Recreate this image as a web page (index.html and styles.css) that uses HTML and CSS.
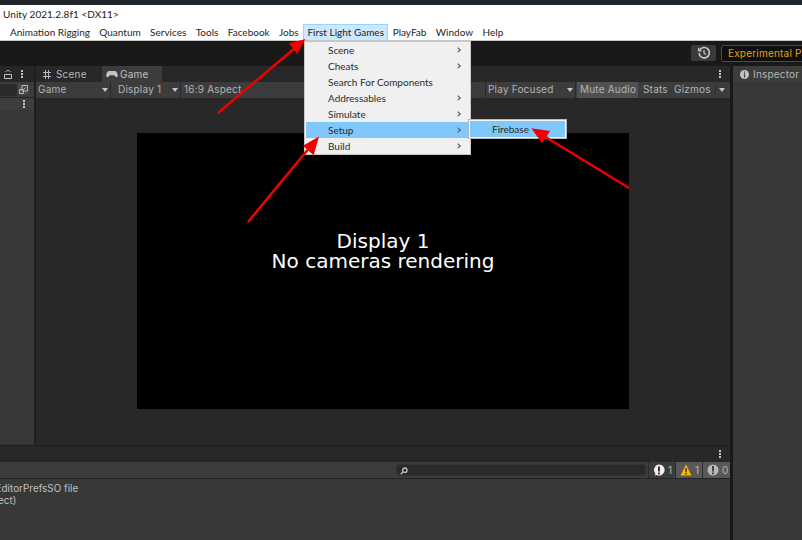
FILE: index.html
```html
<!DOCTYPE html>
<html>
<head>
    <meta charset="utf-8">
    <title>Unity</title>
    <link rel="stylesheet" href="styles.css">
</head>
<body>
<div class="app">
    <div class="os-bar"></div>
    <div class="title-bar">Unity 2021.2.8f1 &lt;DX11&gt;</div>
    <div class="menu-bar">
        <span class="menu-item">Animation Rigging</span>
        <span class="menu-item">Quantum</span>
        <span class="menu-item">Services</span>
        <span class="menu-item">Tools</span>
        <span class="menu-item">Facebook</span>
        <span class="menu-item">Jobs</span>
        <span class="menu-item menu-open">First Light Games</span>
        <span class="menu-item">PlayFab</span>
        <span class="menu-item">Window</span>
        <span class="menu-item">Help</span>
    </div>
    <div class="toolbar">
        <button class="history-btn">
            <svg width="14" height="14" viewBox="0 0 14 14" fill="none" stroke="#c8c8c8" stroke-width="1.6"><path d="M2.6 4.2A5.2 5.2 0 1 1 2 7"/><path d="M1.6 1.8v3h3" stroke-width="1.2"/><path d="M7 4v3.2l2 1.2" stroke-width="1.2"/></svg>
        </button>
        <div class="experimental">Experimental Packages In Use</div>
    </div>
    <div class="workspace">
        <div class="main-col">
            <div class="upper">
                <div class="hierarchy">
                    <div class="panel-tabs hier-tabs">
                        <svg class="lock" width="8" height="9" viewBox="0 0 8 9" fill="none" stroke="#c4c4c4"><path d="M.5 4.500h7v4h-7zM2 2c0-2 4-2 4 0"/></svg>
                        <span class="kebab"><i></i><i></i><i></i></span>
                    </div>
                    <div class="hier-search">
                        <span class="hier-input"></span>
                        <svg class="max-icon" width="11" height="11" viewBox="0 0 11 11" fill="none" stroke="#b4b4b4"><path d="M4 1.500h5.500v5.500H4zM1.500 5.500h4v4h-4zM5.500 5.500l2-2"/></svg>
                    </div>
                    <div class="hier-row"><span class="kebab"><i></i><i></i><i></i></span></div>
                </div>
                <div class="game-panel">
                    <div class="panel-tabs">
                        <div class="tab">
                            <svg width="8" height="9" viewBox="0 0 8 9" fill="none" stroke="#b8b8b8"><path d="M2.500 0v9M5.500 0v9M0 2.500h8M0 6.500h8"/></svg>
                            Scene
                        </div>
                        <div class="tab tab-active">
                            <svg width="12" height="8" viewBox="0 0 13 9"><path fill="#c4c4c4" d="M3 1h7c1.500 0 3 2.500 3 5 0 2.500-2 2.500-3 1L9 6H4L3 7C2 8.500 0 8.500 0 6c0-2.500 1.500-5 3-5z"/></svg>
                            Game
                        </div>
                        <span class="kebab tabs-kebab"><i></i><i></i><i></i></span>
                    </div>
                    <div class="game-toolbar">
                        <div class="drop drop-game">Game<b class="caret"></b></div>
                        <div class="drop drop-display">Display 1<b class="caret"></b></div>
                        <div class="drop drop-aspect">16:9 Aspect</div>
                        <div class="drop drop-play">Play Focused<b class="caret"></b></div>
                        <div class="tool-btn tool-on">Mute Audio</div>
                        <div class="tool-btn tool-stats">Stats</div>
                        <div class="tool-btn tool-gizmos">Gizmos<b class="caret"></b></div>
                    </div>
                    <div class="game-view">
                        <div class="display">
                            <div>Display 1</div>
                            <div>No cameras rendering</div>
                        </div>
                    </div>
                </div>
            </div>
            <div class="console">
                <div class="console-head"><span class="kebab tabs-kebab"><i></i><i></i><i></i></span></div>
                <div class="console-toolbar">
                    <div class="console-search">
                        <svg width="8" height="8" viewBox="0 0 8 8" fill="none" stroke="#c4c4c4" stroke-width="1.300"><circle cx="4.800" cy="3.200" r="2.200"/><path d="M3.200 4.800L.8 7.200"/></svg>
                    </div>
                    <div class="count">
                        <svg width="12" height="12" viewBox="0 0 12 12"><path fill="#eee" d="M6 .5a5.500 5.500 0 1 1-2.200 10.500L2 11.500l.3-2A5.500 5.500 0 0 1 6 .5z"/><path fill="#333" d="M5 2.500h2v5H5zM5 8.500h2v1.800H5z"/></svg>
                        <span>1</span>
                    </div>
                    <div class="count count-on">
                        <svg width="12" height="12" viewBox="0 0 12 12"><path fill="#ffb400" d="M6 .5l5.500 11H.5z"/><path fill="#333" d="M5.300 4h1.400v4.300H5.300zM5.300 9h1.400v1.500H5.300z"/></svg>
                        <span>1</span>
                    </div>
                    <div class="count count-on count-last">
                        <svg width="12" height="12" viewBox="0 0 12 12"><circle cx="6" cy="6" r="5.500" fill="#b8b8b8"/><path fill="#444" d="M5 2h2v5.500H5zM5 8.500h2v1.800H5z"/></svg>
                        <span>0</span>
                    </div>
                </div>
                <div class="console-body">
                    <div>(EditorPrefsSO file</div>
                    <div class="console-line2">Object)</div>
                </div>
            </div>
        </div>
        <div class="inspector">
            <div class="inspector-tab">
                <svg width="9" height="9" viewBox="0 0 9 9"><circle cx="4.500" cy="4.500" r="4.500" fill="#c4c4c4"/><path fill="#3c3c3c" d="M3.900 1.500h1.200v1.200H3.900zM3.900 3.600h1.200v4H3.900z"/></svg>
                Inspector
            </div>
        </div>
    </div>

    <div class="dropdown">
        <div class="dd-row">Scene<b class="chev"></b></div>
        <div class="dd-row">Cheats<b class="chev"></b></div>
        <div class="dd-row">Search For Components</div>
        <div class="dd-row">Addressables<b class="chev"></b></div>
        <div class="dd-row">Simulate<b class="chev"></b></div>
        <div class="dd-row dd-hot">Setup<b class="chev"></b></div>
        <div class="dd-row">Build<b class="chev"></b></div>
    </div>
    <div class="submenu"><div class="sub-row">Firebase</div></div>

    <svg class="arrows" width="802" height="540" viewBox="0 0 802 540">
        <g stroke="#f00000" stroke-width="2.500" fill="#f00000">
            <path d="M218 113L295 48"/>
            <path d="M303 41L291 44L297 52z"/>
            <path d="M248 222L310 147"/>
            <path d="M317 139L305 146L313 153z"/>
            <path d="M629 188L544 136"/>
            <path d="M534 130L548 132L542 141z"/>
        </g>
    </svg>
</div>
</body>
</html>
```
FILE: styles.css
```css
* {
    box-sizing: border-box;
}
body {
    margin: 0;
    background: #191919;
}
.app {
    position: relative;
    width: 802px;
    height: 540px;
    overflow: hidden;
    display: flex;
    flex-direction: column;
    font-family: "Inter", "Liberation Sans", sans-serif;
    font-size: 10px;
    letter-spacing: 0.2px;
    color: #b4b4b4;
}
.os-bar {
    height: 5px;
    background: #21262b;
}
.title-bar {
    height: 19px;
    padding: 3px 0 0 3px;
    background: #fff;
    color: #222;
    font-family: "Lato", sans-serif;
    font-size: 10px;
    letter-spacing: 0.05px;
}
.menu-bar {
    height: 17px;
    display: flex;
    padding-left: 5.300px;
    background: #fff;
    border-bottom: 1px solid #c8c8c8;
    color: #1e1e1e;
    font-family: "Lato", sans-serif;
    font-size: 10px;
    letter-spacing: 0;
    line-height: 17px;
}
.menu-item {
    padding: 0 4.700px;
    white-space: nowrap;
}
.menu-open {
    background: #cce8ff;
    border: 1px solid #99d1ff;
    border-bottom: 0;
    padding: 0 3px;
    line-height: 15px;
}
.toolbar {
    height: 25px;
    display: flex;
    align-items: flex-start;
    padding: 4px 0 0 691px;
    background: #191919;
}
.history-btn {
    width: 25px;
    height: 16px;
    padding: 1px 0 0;
    border: 0;
    border-radius: 2px;
    background: #3a3a3a;
    flex: none;
}
.experimental {
    flex: none;
    height: 17px;
    margin-left: 5px;
    padding: 0 6px;
    border: 1px solid #6b4a08;
    border-radius: 3px;
    background: #0e0e0e;
    color: #e8a010;
    line-height: 15px;
    white-space: nowrap;
}
.workspace {
    flex: 1;
    display: flex;
    min-height: 0;
}
.main-col {
    width: 730px;
    display: flex;
    flex-direction: column;
    flex: none;
}
.upper {
    flex: 1;
    display: flex;
    min-height: 0;
}
.hierarchy {
    width: 34px;
    background: #383838;
}
.panel-tabs {
    height: 16px;
    display: flex;
    align-items: stretch;
    background: #282828;
    position: relative;
}
.hier-tabs {
    background: #262626;
    justify-content: flex-end;
    align-items: center;
    gap: 9px;
    padding-right: 11px;
}
.kebab {
    display: inline-flex;
    flex-direction: column;
    gap: 1px;
}
.kebab i {
    width: 2px;
    height: 2px;
    background: #c4c4c4;
}
.hier-search {
    height: 16px;
    display: flex;
    align-items: center;
    background: #3c3c3c;
    border-bottom: 1px solid #252525;
}
.hier-input {
    width: 17px;
    height: 12px;
    background: #2a2a2a;
    border-radius: 0 3px 3px 0;
}
.max-icon {
    margin-left: 1px;
    background: #484848;
    border-radius: 2px;
}
.hier-row {
    height: 12px;
    display: flex;
    justify-content: flex-end;
    align-items: center;
    padding-right: 9px;
    background: #3e3e3e;
}
.game-panel {
    flex: 1;
    margin-left: 2px;
    display: flex;
    flex-direction: column;
    min-width: 0;
    box-shadow: -2px 0 0 #1e1e1e;
}
.tab {
    display: flex;
    align-items: center;
    gap: 5px;
    padding-left: 7px;
    width: 66px;
}
.tab-active {
    width: 60px;
    padding-left: 4px;
    gap: 2px;
    background: #3c3c3c;
    color: #c0c0c0;
}
.tabs-kebab {
    position: absolute;
    right: 9px;
    top: 4px;
}
.game-toolbar {
    height: 16px;
    display: flex;
    align-items: stretch;
    background: #3c3c3c;
    line-height: 15px;
}
.drop {
    position: relative;
    padding-left: 2px;
    border-right: 1px solid #282828;
    white-space: nowrap;
}
.caret {
    position: absolute;
    right: 2px;
    top: 6px;
    border: 3.500px solid transparent;
    border-top: 4px solid #c4c4c4;
    border-bottom: 0;
}
.drop-game {
    width: 75px;
}
.drop-display {
    width: 70px;
    padding-left: 7px;
}
.drop-aspect {
    width: 305px;
    padding-left: 3px;
}
.drop-play {
    width: 90px;
    padding-left: 2px;
}
.tool-btn {
    padding: 0 3px;
    white-space: nowrap;
}
.tool-on {
    width: 61px;
    background: #505050;
    margin-left: 1px;
}
.tool-stats {
    width: 32px;
    padding-left: 5px;
}
.tool-gizmos {
    position: relative;
    flex: 1;
    padding-left: 4px;
}
.tool-gizmos::after {
    content: "";
    position: absolute;
    right: 14px;
    top: 3px;
    width: 1px;
    height: 10px;
    background: #2c2c2c;
}
.tool-gizmos .caret {
    right: 5px;
}
.game-view {
    flex: 1;
    display: flex;
    align-items: center;
    justify-content: center;
    padding-bottom: 2px;
    background: #282828;
}
.display {
    width: 492px;
    height: 276px;
    display: flex;
    flex-direction: column;
    align-items: center;
    justify-content: center;
    padding-bottom: 40px;
    background: #000;
    color: #fff;
    font-family: "DejaVu Sans", sans-serif;
    font-size: 20px;
    letter-spacing: 0;
    line-height: 20px;
}
.console {
    height: 95px;
    display: flex;
    flex-direction: column;
    border-top: 1px solid #1e1e1e;
}
.console-head {
    height: 16px;
    position: relative;
    background: #282828;
}
.console-toolbar {
    height: 17px;
    display: flex;
    align-items: stretch;
    justify-content: flex-end;
    background: #3c3c3c;
    border-bottom: 1px solid #232323;
}
.console-search {
    width: 250px;
    height: 12px;
    margin: 2px 2px 0 0;
    padding: 2px 0 0 3px;
    background: #2a2a2a;
    border: 1px solid #333;
    border-radius: 3px;
    line-height: 0;
}
.count {
    width: 27px;
    display: flex;
    align-items: center;
    gap: 3px;
    padding-left: 4px;
    border-left: 1px solid #2c2c2c;
}
.count-last {
    width: 28px;
}
.count-on {
    background: #585858;
}
.console-body {
    flex: 1;
    padding-top: 4px;
    background: #383838;
    color: #c0c0c0;
    font-size: 9.800px;
    letter-spacing: 0.05px;
    line-height: 12px;
    margin-left: -8px;
    white-space: nowrap;
}
.console-line2 {
    margin-left: -10px;
}
.inspector {
    flex: 1;
    margin-left: 3px;
    background: #383838;
    box-shadow: -3px 0 0 #191919;
}
.inspector-tab {
    height: 16px;
    display: flex;
    align-items: center;
    gap: 4px;
    padding-left: 7px;
    background: #3c3c3c;
}
.dropdown {
    position: absolute;
    left: 304px;
    top: 41px;
    width: 167px;
    height: 114px;
    padding: 0 1px;
    background: #f0f0f0;
    border: 1px solid #c8c8c8;
    color: #2a2a2a;
    font-family: "Lato", sans-serif;
    font-size: 10px;
    letter-spacing: 0;
}
.dd-row {
    position: relative;
    height: 16px;
    line-height: 17px;
    padding-left: 22px;
}
.dd-hot {
    background: #80c8fb;
}
.chev {
    position: absolute;
    right: 9px;
    top: 6px;
    width: 4px;
    height: 4px;
    border-top: 1px solid #555;
    border-right: 1px solid #555;
    transform: rotate(45deg);
}
.submenu {
    position: absolute;
    left: 468px;
    top: 119px;
    width: 99px;
    height: 20px;
    padding: 1px;
    background: #f4f4f4;
    border: 1px solid #b8b8b8;
}
.sub-row {
    height: 16px;
    padding-left: 22px;
    background: #80c8fb;
    color: #2a2a2a;
    font-family: "Lato", sans-serif;
    font-size: 10px;
    letter-spacing: 0;
    line-height: 17px;
}
.arrows {
    position: absolute;
    left: 0;
    top: 0;
    pointer-events: none;
}
```
